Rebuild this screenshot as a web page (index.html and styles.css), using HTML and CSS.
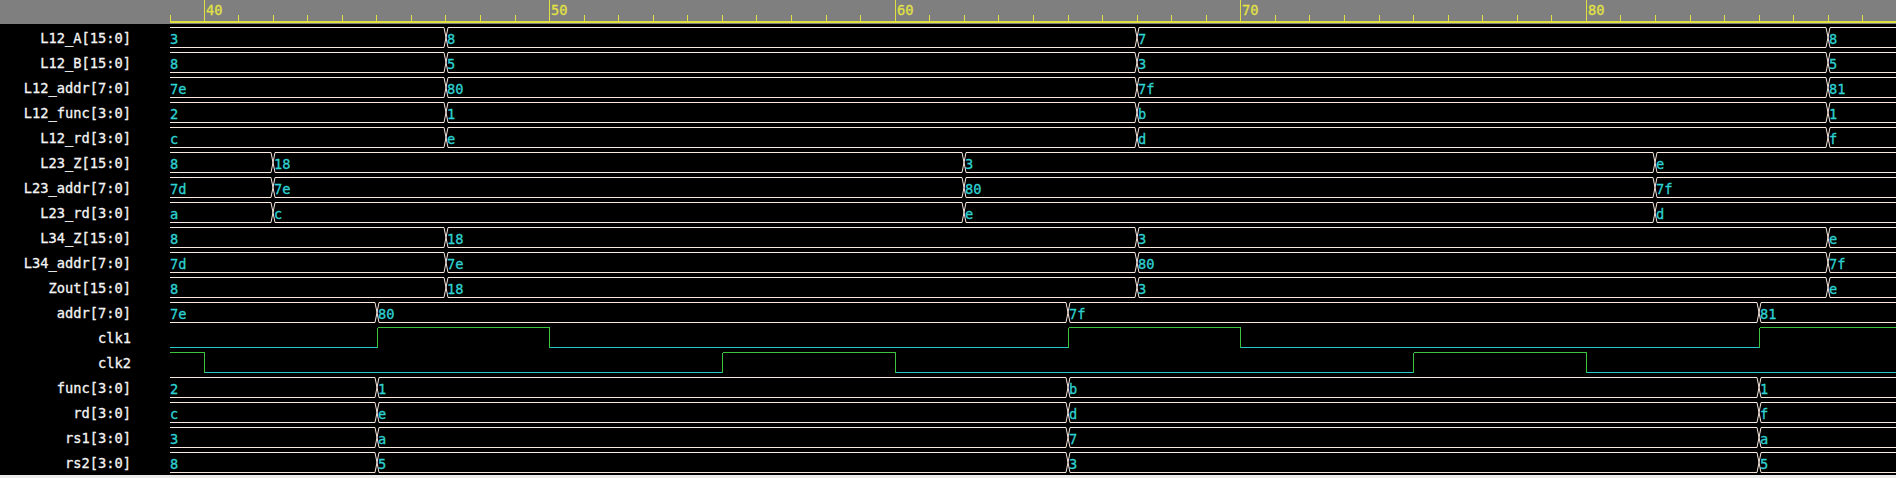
FILE: index.html
```html
<!DOCTYPE html>
<html lang="en">
<head>
<meta charset="utf-8">
<title>Waveform viewer</title>
<link rel="stylesheet" href="styles.css">
</head>
<body>
<div class="viewer">
  <div class="header">
    <div class="header-spacer"></div>
    <svg class="ruler" width="1726" height="24" viewBox="0 0 1726 24">
      <rect class="axis" x="0" y="21" width="1726" height="2"/>
      <path class="ticks" d="M0.5 15V21M68.5 15V21M103.5 15V21M137.5 15V21M172.5 15V21M206.5 15V21M241.5 15V21M275.5 15V21M310.5 15V21M345.5 15V21M414.5 15V21M448.5 15V21M483.5 15V21M517.5 15V21M552.5 15V21M586.5 15V21M621.5 15V21M656.5 15V21M690.5 15V21M759.5 15V21M794.5 15V21M828.5 15V21M863.5 15V21M898.5 15V21M932.5 15V21M967.5 15V21M1001.5 15V21M1036.5 15V21M1105.5 15V21M1139.5 15V21M1174.5 15V21M1209.5 15V21M1243.5 15V21M1278.5 15V21M1312.5 15V21M1347.5 15V21M1381.5 15V21M1450.5 15V21M1485.5 15V21M1520.5 15V21M1554.5 15V21M1589.5 15V21M1623.5 15V21M1658.5 15V21M1692.5 15V21"/>
      <path class="ticks" d="M34.5 0V21M379.5 0V21M725.5 0V21M1070.5 0V21M1416.5 0V21"/>
      <text x="36" y="15">40</text>
      <text x="381" y="15">50</text>
      <text x="727" y="15">60</text>
      <text x="1072" y="15">70</text>
      <text x="1418" y="15">80</text>
    </svg>
  </div>
  <div class="main">
    <div class="names">
      <div class="name">L12_A[15:0]</div>
      <div class="name">L12_B[15:0]</div>
      <div class="name">L12_addr[7:0]</div>
      <div class="name">L12_func[3:0]</div>
      <div class="name">L12_rd[3:0]</div>
      <div class="name">L23_Z[15:0]</div>
      <div class="name">L23_addr[7:0]</div>
      <div class="name">L23_rd[3:0]</div>
      <div class="name">L34_Z[15:0]</div>
      <div class="name">L34_addr[7:0]</div>
      <div class="name">Zout[15:0]</div>
      <div class="name">addr[7:0]</div>
      <div class="name">clk1</div>
      <div class="name">clk2</div>
      <div class="name">func[3:0]</div>
      <div class="name">rd[3:0]</div>
      <div class="name">rs1[3:0]</div>
      <div class="name">rs2[3:0]</div>
    </div>
    <svg class="waves" width="1726" height="450" viewBox="0 0 1726 450">
      <defs>
        <path id="busA" class="bus" d="M0 3.5H274L278 23.5H965L969 3.5H1656L1660 23.5H1726M0 23.5H274L278 3.5H965L969 23.5H1656L1660 3.5H1726"/>
        <path id="busB" class="bus" d="M0 3.5H101L105 23.5H792L796 3.5H1483L1487 23.5H1726M0 23.5H101L105 3.5H792L796 23.5H1483L1487 3.5H1726"/>
        <path id="busC" class="bus" d="M0 3.5H205L209 23.5H896L900 3.5H1587L1591 23.5H1726M0 23.5H205L209 3.5H896L900 23.5H1587L1591 3.5H1726"/>
      </defs>

      <g transform="translate(0 0)"><use href="#busA"/>
        <text x="0" y="19.5">3</text><text x="277" y="19.5">8</text><text x="968" y="19.5">7</text><text x="1659" y="19.5">8</text></g>
      <g transform="translate(0 25)"><use href="#busA"/>
        <text x="0" y="19.5">8</text><text x="277" y="19.5">5</text><text x="968" y="19.5">3</text><text x="1659" y="19.5">5</text></g>
      <g transform="translate(0 50)"><use href="#busA"/>
        <text x="0" y="19.5">7e</text><text x="277" y="19.5">80</text><text x="968" y="19.5">7f</text><text x="1659" y="19.5">81</text></g>
      <g transform="translate(0 75)"><use href="#busA"/>
        <text x="0" y="19.5">2</text><text x="277" y="19.5">1</text><text x="968" y="19.5">b</text><text x="1659" y="19.5">1</text></g>
      <g transform="translate(0 100)"><use href="#busA"/>
        <text x="0" y="19.5">c</text><text x="277" y="19.5">e</text><text x="968" y="19.5">d</text><text x="1659" y="19.5">f</text></g>
      <g transform="translate(0 125)"><use href="#busB"/>
        <text x="0" y="19.5">8</text><text x="104" y="19.5">18</text><text x="795" y="19.5">3</text><text x="1486" y="19.5">e</text></g>
      <g transform="translate(0 150)"><use href="#busB"/>
        <text x="0" y="19.5">7d</text><text x="104" y="19.5">7e</text><text x="795" y="19.5">80</text><text x="1486" y="19.5">7f</text></g>
      <g transform="translate(0 175)"><use href="#busB"/>
        <text x="0" y="19.5">a</text><text x="104" y="19.5">c</text><text x="795" y="19.5">e</text><text x="1486" y="19.5">d</text></g>
      <g transform="translate(0 200)"><use href="#busA"/>
        <text x="0" y="19.5">8</text><text x="277" y="19.5">18</text><text x="968" y="19.5">3</text><text x="1659" y="19.5">e</text></g>
      <g transform="translate(0 225)"><use href="#busA"/>
        <text x="0" y="19.5">7d</text><text x="277" y="19.5">7e</text><text x="968" y="19.5">80</text><text x="1659" y="19.5">7f</text></g>
      <g transform="translate(0 250)"><use href="#busA"/>
        <text x="0" y="19.5">8</text><text x="277" y="19.5">18</text><text x="968" y="19.5">3</text><text x="1659" y="19.5">e</text></g>
      <g transform="translate(0 275)"><use href="#busC"/>
        <text x="0" y="19.5">7e</text><text x="208" y="19.5">80</text><text x="899" y="19.5">7f</text><text x="1590" y="19.5">81</text></g>

      <g transform="translate(0 300)">
        <path class="lo" d="M0 23.5H207.5M379.5 23.5H898.5M1070.5 23.5H1589.5"/>
        <path class="hi" d="M207.5 3.5H379.5M898.5 3.5H1070.5M1589.5 3.5H1726M207.5 3.5V23.5M379.5 3.5V23.5M898.5 3.5V23.5M1070.5 3.5V23.5M1589.5 3.5V23.5"/>
      </g>
      <g transform="translate(0 325)">
        <path class="lo" d="M34.5 23.5H552.5M725.5 23.5H1243.5M1416.5 23.5H1726"/>
        <path class="hi" d="M0 3.5H34.5M552.5 3.5H725.5M1243.5 3.5H1416.5M34.5 3.5V23.5M552.5 3.5V23.5M725.5 3.5V23.5M1243.5 3.5V23.5M1416.5 3.5V23.5"/>
      </g>

      <g transform="translate(0 350)"><use href="#busC"/>
        <text x="0" y="19.5">2</text><text x="208" y="19.5">1</text><text x="899" y="19.5">b</text><text x="1590" y="19.5">1</text></g>
      <g transform="translate(0 375)"><use href="#busC"/>
        <text x="0" y="19.5">c</text><text x="208" y="19.5">e</text><text x="899" y="19.5">d</text><text x="1590" y="19.5">f</text></g>
      <g transform="translate(0 400)"><use href="#busC"/>
        <text x="0" y="19.5">3</text><text x="208" y="19.5">a</text><text x="899" y="19.5">7</text><text x="1590" y="19.5">a</text></g>
      <g transform="translate(0 425)"><use href="#busC"/>
        <text x="0" y="19.5">8</text><text x="208" y="19.5">5</text><text x="899" y="19.5">3</text><text x="1590" y="19.5">5</text></g>
    </svg>
  </div>
  <div class="gap"></div>
  <div class="footer"></div>
</div>
</body>
</html>
```

FILE: styles.css
```css
html, body {
  margin: 0;
  padding: 0;
  background: #000;
}

body {
  width: 1896px;
  height: 478px;
  overflow: hidden;
  font-family: "DejaVu Sans Mono", "Liberation Mono", monospace;
}

.viewer {
  display: flex;
  flex-direction: column;
  width: 1896px;
  height: 478px;
}

.header {
  display: flex;
  flex: none;
  height: 24px;
  background: #7f7f7f;
}

.header-spacer {
  flex: none;
  width: 170px;
}

.ruler {
  display: block;
  flex: none;
}

.ruler .axis {
  fill: #e0e040;
}

.ruler .ticks {
  fill: none;
  stroke: #e0e040;
  stroke-width: 1;
  shape-rendering: crispEdges;
}

.ruler text {
  fill: #e2e244;
  stroke: #e2e244;
  stroke-width: 0.3px;
  font-family: "DejaVu Sans Mono", "Liberation Mono", monospace;
  font-size: 13.7px;
}

.main {
  display: grid;
  grid-template-columns: 170px 1726px;
  flex: none;
  height: 450px;
}

.names {
  display: flex;
  flex-direction: column;
}

.name {
  box-sizing: border-box;
  height: 25px;
  padding: 4px 39px 0 0;
  line-height: 21px;
  font-size: 13.7px;
  color: #f4f4f4;
  -webkit-text-stroke: 0.3px #f4f4f4;
  text-align: right;
  white-space: nowrap;
}

.waves {
  display: block;
}

.waves .bus {
  fill: none;
  stroke: #f8e8de;
  stroke-width: 1;
}

.waves text {
  fill: #2ed2d2;
  stroke: #2ed2d2;
  stroke-width: 0.3px;
  font-family: "DejaVu Sans Mono", "Liberation Mono", monospace;
  font-size: 13.7px;
}

.waves .lo {
  fill: none;
  stroke: #22c8c8;
  stroke-width: 1;
  shape-rendering: crispEdges;
}

.waves .hi {
  fill: none;
  stroke: #3cc43c;
  stroke-width: 1;
  shape-rendering: crispEdges;
}

.gap {
  flex: none;
  height: 1px;
}

.footer {
  flex: none;
  height: 3px;
  background: #ececec;
}
```
